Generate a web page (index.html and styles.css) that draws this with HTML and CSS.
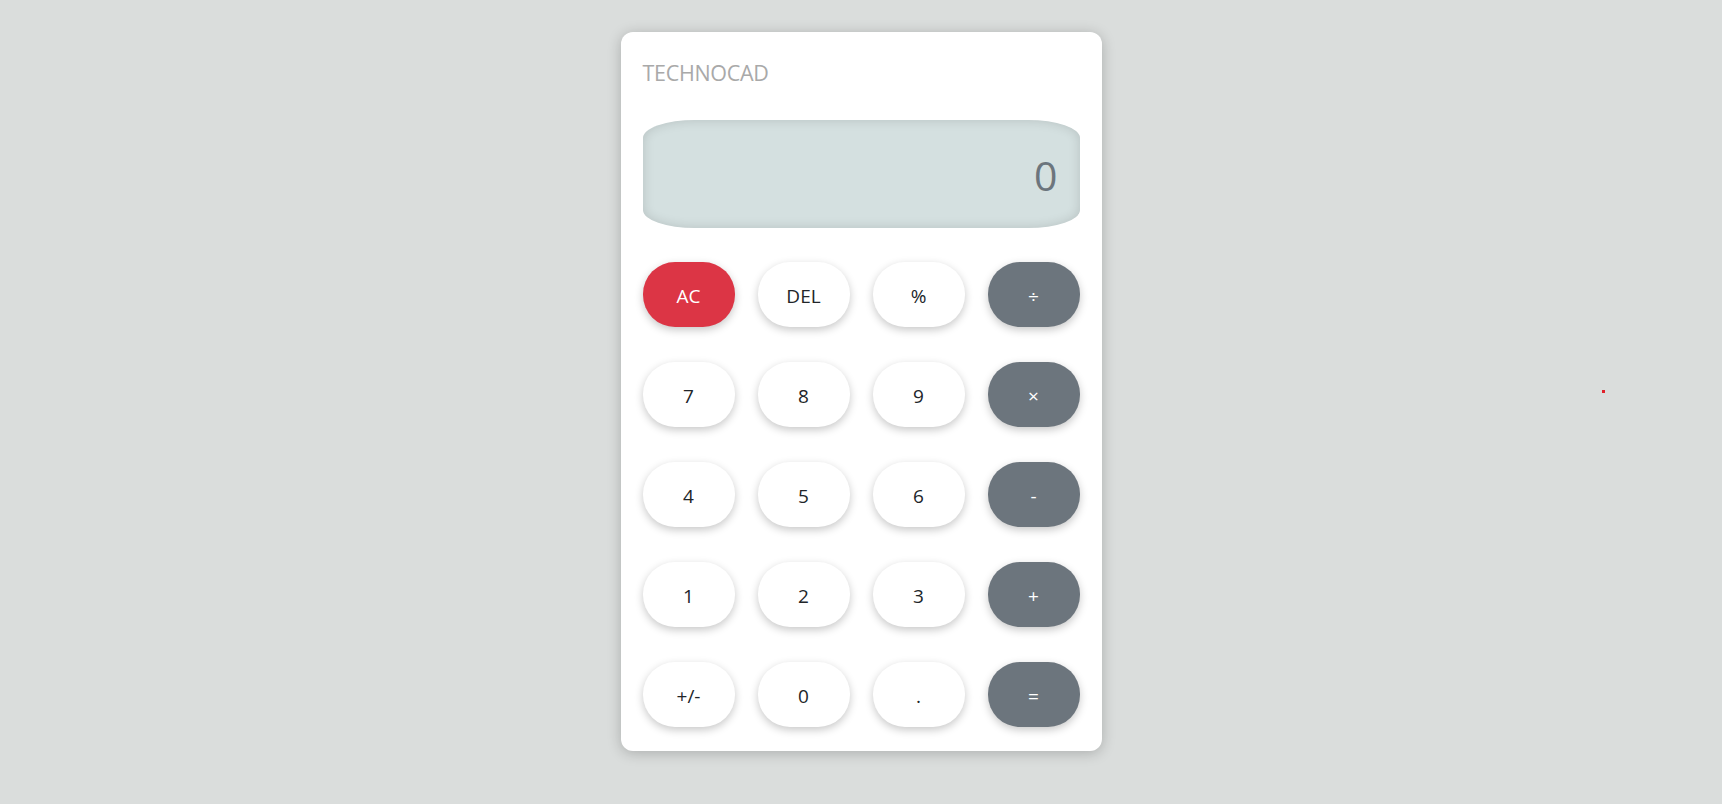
FILE: index.html
```
<!DOCTYPE html>
<html>
<head>
<meta charset="utf-8">
<link rel="stylesheet" href="styles.css">
</head>
<body>
<div class="calc">
  <div class="brand">TECHNOCAD</div>
  <div class="display">0</div>
  <div class="keys">
    <button class="key danger">AC</button>
    <button class="key">DEL</button>
    <button class="key">%</button>
    <button class="key op">÷</button>
    <button class="key">7</button>
    <button class="key">8</button>
    <button class="key">9</button>
    <button class="key op">×</button>
    <button class="key">4</button>
    <button class="key">5</button>
    <button class="key">6</button>
    <button class="key op">-</button>
    <button class="key">1</button>
    <button class="key">2</button>
    <button class="key">3</button>
    <button class="key op">+</button>
    <button class="key">+/-</button>
    <button class="key">0</button>
    <button class="key">.</button>
    <button class="key op">=</button>
  </div>
</div>
<div class="dot"></div>
</body>
</html>
```
FILE: styles.css
```
html, body {
  margin: 0;
  height: 100%;
}
body {
  background: #dadddc;
  font-family: "Open Sans", "Noto Sans", sans-serif;
  display: flex;
  justify-content: center;
  align-items: flex-start;
  padding-top: 32px;
  box-sizing: border-box;
}
.calc {
  width: 481px;
  box-sizing: border-box;
  background: #fff;
  border-radius: 12px;
  box-shadow: 0 2px 14px rgba(0, 0, 0, 0.22);
  padding: 26px 22px 24px 22px;
}
.brand {
  color: #a9a9a9;
  font-size: 21.5px;
  letter-spacing: -0.3px;
  line-height: 30px;
  height: 30px;
  margin-left: 0;
}
.display {
  margin-top: 32px;
  height: 108px;
  background: #d4e0e0;
  border-radius: 52px / 18px;
  box-shadow: inset 0 0 12px rgba(0, 0, 0, 0.14);
  color: #6c757d;
  font-size: 41px;
  display: flex;
  align-items: center;
  justify-content: flex-end;
  padding-right: 22px;
  padding-top: 2px;
  box-sizing: border-box;
}
.keys {
  margin-top: 34px;
  display: grid;
  grid-template-columns: repeat(4, 92px);
  column-gap: 23px;
  row-gap: 35px;
}
.key {
  height: 65px;
  border: none;
  border-radius: 32px;
  background: #fff;
  color: #212529;
  font-family: "Open Sans", "Noto Sans", sans-serif;
  font-size: 19px;
  box-shadow: 0 3px 9px rgba(0, 0, 0, 0.22);
  padding: 4px 0 0 0;
  line-height: 1;
}
.key.danger {
  background: #dc3545;
  color: #fff;
}
.key.op {
  background: #6c757d;
  color: #fff;
}
.dot {
  position: absolute;
  left: 1602px;
  top: 390px;
  width: 3px;
  height: 3px;
  background: #e0202a;
}
```
